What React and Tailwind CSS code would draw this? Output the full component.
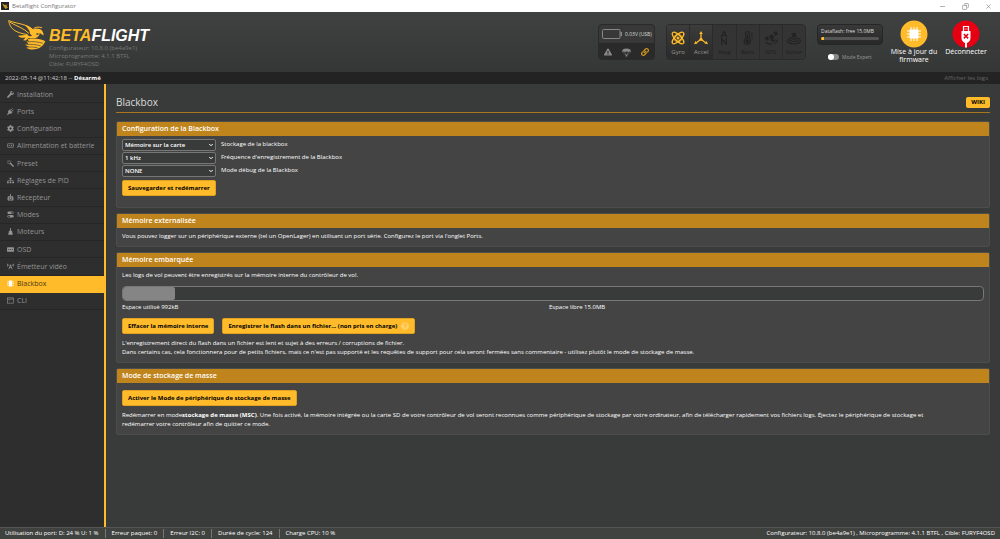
import { useState } from "react";
import { FaWrench, FaCog, FaSitemap, FaExclamationTriangle, FaLink, FaBroadcastTower, FaQuestionCircle } from "react-icons/fa";
import { ChevronDown, Minus, Copy, X } from "lucide-react";

function PlugIcon() {
    return (
        <svg viewBox="0 0 16 16" fill="currentColor">
            <path d="M0 15l3-4c-1-3 0-5 2-7l7 7c-2 2-4 3-7 2l-3 3z" />
            <path d="M8 5l4-4M11 8l4-4" stroke="currentColor" strokeWidth="2" />
            <path d="M6 3l7 7" stroke="currentColor" strokeWidth="1.500" />
        </svg>
    );
}

function BatteryIcon() {
    return (
        <svg viewBox="0 0 16 16" fill="none" stroke="currentColor" strokeWidth="1.600">
            <rect x="1" y="4" width="14" height="8" rx="1" />
            <path d="M4 8h3M9 8h3M10.500 6.500v3" />
        </svg>
    );
}

function WandIcon() {
    return (
        <svg viewBox="0 0 16 16" fill="none" stroke="currentColor">
            <path d="M7 7l8 8" strokeWidth="3" />
            <path d="M5 0v3M0 5h3M1.500 1.500l2 2M9 1.500l-2 2M1.500 9l2-2M5 7v3M7 5h3" strokeWidth="1.400" />
        </svg>
    );
}

function ReceiverIcon() {
    return (
        <svg viewBox="0 0 16 16" fill="currentColor">
            <path d="M7 0h2v5H7z" />
            <path fillRule="evenodd" d="M2 5h12v10H2zM4 8v2h3V8zM9 8v2h3V8zM4 12v1h8v-1z" />
            <path d="M0 8h1v5H0zM15 8h1v5h-1z" />
        </svg>
    );
}

function ModesIcon() {
    return (
        <svg viewBox="0 0 16 16">
            <rect x="1" y="1" width="14" height="6" rx="3" fill="currentColor" />
            <rect x="1" y="9" width="14" height="6" rx="3" fill="currentColor" />
            <circle cx="11.500" cy="4" r="2" fill="#2e2e2e" />
            <circle cx="4.500" cy="12" r="2" fill="#2e2e2e" />
        </svg>
    );
}

function MotorIcon() {
    return (
        <svg viewBox="0 0 16 16" fill="currentColor">
            <path d="M7 0h2v5l3 3v7H4V8l3-3z" />
            <path d="M3 12h10v3H3z" />
        </svg>
    );
}

function OsdIcon() {
    return (
        <svg viewBox="0 0 16 16">
            <rect x="0" y="3" width="16" height="10" rx="1" fill="currentColor" />
            <path d="M2 8h3M6.500 8h3M11 8h3" stroke="#2e2e2e" strokeWidth="1.500" fill="none" />
        </svg>
    );
}

function ChipIcon() {
    return (
        <svg viewBox="0 0 16 16" fill="currentColor">
            <rect x="4" y="1" width="8" height="14" rx="1" />
            <path d="M1 3h2v2H1zM1 7h2v2H1zM1 11h2v2H1zM13 3h2v2h-2zM13 7h2v2h-2zM13 11h2v2h-2z" />
        </svg>
    );
}

function TerminalIcon() {
    return (
        <svg viewBox="0 0 16 16" fill="none" stroke="currentColor" strokeWidth="1.400">
            <rect x="1" y="2" width="14" height="12" />
            <path d="M1 5h14M4 7.500l2 1.500" />
        </svg>
    );
}

const tabs = [
    { name: "Installation", icon: FaWrench },
    { name: "Ports", icon: PlugIcon },
    { name: "Configuration", icon: FaCog },
    { name: "Alimentation et batterie", icon: BatteryIcon },
    { name: "Preset", icon: WandIcon },
    { name: "Réglages de PID", icon: FaSitemap },
    { name: "Récepteur", icon: ReceiverIcon },
    { name: "Modes", icon: ModesIcon },
    { name: "Moteurs", icon: MotorIcon },
    { name: "OSD", icon: OsdIcon },
    { name: "Émetteur vidéo", icon: FaBroadcastTower },
    { name: "Blackbox", icon: ChipIcon },
    { name: "CLI", icon: TerminalIcon },
];

function GyroIcon() {
    return (
        <svg viewBox="0 0 24 24" className="size-[14px]" fill="none" stroke="currentColor" strokeWidth="2.200">
            <ellipse cx="12" cy="12" rx="13" ry="5" transform="rotate(45 12 12)" />
            <ellipse cx="12" cy="12" rx="13" ry="5" transform="rotate(-45 12 12)" />
            <circle cx="12" cy="12" r="6.500" strokeWidth="1.500" />
            <circle cx="12" cy="12" r="1.500" fill="currentColor" />
        </svg>
    );
}

function AccelIcon() {
    return (
        <svg viewBox="0 0 24 24" className="size-[14px]" fill="none" stroke="currentColor" strokeWidth="2.200">
            <path d="M12 4v10L4 20M12 14l8 6" />
            <path d="M12 0l3 5H9zM0 22.500l2.500-5.500 3.500 4.500zM24 22.500L21.500 17 18 21.500z" fill="currentColor" stroke="none" />
            <circle cx="12" cy="14" r="2.600" fill="currentColor" stroke="none" />
        </svg>
    );
}

function MagIcon() {
    return (
        <svg viewBox="0 0 24 24" className="size-[14px]" fill="none" stroke="currentColor" strokeWidth="2">
            <path d="M12 0l4 9-4-2-4 2zM8 24V13l8 10V12" />
        </svg>
    );
}

function BaroIcon() {
    return (
        <svg viewBox="0 0 24 24" className="size-[14px]" fill="none" stroke="currentColor" strokeWidth="2">
            <path d="M8 13V4a3 3 0 0 1 6 0v9a5.500 5.500 0 1 1-6 0z" />
            <circle cx="11" cy="17.500" r="2.500" fill="currentColor" />
            <path d="M11 16V6M17 4h3M17 8h3M17 12h3" />
        </svg>
    );
}

function GpsIcon() {
    return (
        <svg viewBox="0 0 24 24" className="size-[14px]" fill="currentColor">
            <path d="M8 9l6-4 4 6-6 4zM16 3l5-3 3 5-5 3zM1 12l5-3 3 5-5 3zM11 14l5-1v4l-3 1z" />
            <path d="M17 21a7 7 0 0 0 6-6M15 17a3 3 0 0 0 4-3" fill="none" stroke="currentColor" strokeWidth="2" />
            <path d="M3 19c3 3 7 4 11 3" fill="none" stroke="currentColor" strokeWidth="2" />
        </svg>
    );
}

function SonarIcon() {
    return (
        <svg viewBox="0 0 24 24" className="size-[14px]" fill="none" stroke="currentColor" strokeWidth="2">
            <path d="M8 6a5 5 0 0 1 8 0" />
            <path d="M6 10c0 3 2.500 4 6 4s6-1 6-4M3 12c0 4 4 6 9 6s9-2 9-6M0 14c0 5 5 8 12 8s12-3 12-8" />
            <circle cx="12" cy="8" r="2.500" fill="currentColor" />
        </svg>
    );
}

function ParachuteIcon() {
    return (
        <svg viewBox="0 0 16 16" className="size-[9px]" fill="currentColor">
            <path d="M0 7a8 6 0 0 1 16 0l-2.500-1L11 7 8 6 5 7 2.500 6z" />
            <path d="M1 7l6 6M15 7l-6 6M5 7l2.500 6M11 7l-2.500 6" stroke="currentColor" strokeWidth="0.800" />
            <path d="M6.500 12h3v3h-3z" />
        </svg>
    );
}

const sensors = [
    { name: "Gyro", icon: GyroIcon, on: true },
    { name: "Accel", icon: AccelIcon, on: true },
    { name: "Mag", icon: MagIcon },
    { name: "Baro", icon: BaroIcon },
    { name: "GPS", icon: GpsIcon },
    { name: "Sonar", icon: SonarIcon },
];

function BeeLogo({ className }) {
    return (
        <svg viewBox="24 58 116 94" className={className} fill="#ffbb2a">
            {/* wing */}
            <path
                d="M26 61c14 6 36 9 50 14 12 4 20 10 26 18M26 61c2 12 6 20 14 27 10 9 24 12 44 16M30 66c20 12 42 18 58 34"
                fill="none"
                stroke="#ffbb2a"
                strokeWidth="3"
            />
            <path d="M74 74c14 3 22 9 30 18l-10 10c-4-10-10-18-20-28z" />
            {/* second wing and back */}
            <path d="M54 107l28-3 10 6-14 12-8-1 8-8c-10 2-17 0-24-6z" />
            {/* head */}
            <path d="M90 94c8-8 20-12 31-7 8 4 11 10 12 19-6-2-9-4-12-8 0 8-5 14-13 16l-16 2-10-5 16-4c-5-3-8-7-8-13z" />
            <path d="M102 86c4-5 14-7 26-3" fill="none" stroke="#ffbb2a" strokeWidth="3" />
            <path d="M110 100l10 1-8 5z" fill="#393b3a" />
            {/* tail */}
            <path d="M84 118c16-4 38-3 54 6-4 10-12 18-24 23-14 4-26 3-34-3l8-3-12-6 10-3-6-7 8 0z" />
            <path d="M84 126c16-2 32 0 46 4M80 134c14-1 30 0 44 4M84 142c10-1 20 0 30 2" fill="none" stroke="#393b3a" strokeWidth="2" />
        </svg>
    );
}

function FirmwareIcon() {
    return (
        <svg viewBox="0 0 28 28" className="size-7">
            <circle cx="14" cy="14" r="13.500" fill="#ffbb2a" />
            <rect x="9.500" y="9.500" width="9" height="9" rx="1" fill="#fff" />
            <path d="M11 7v14M14 7v14M17 7v14M7 11h14M7 14h14M7 17h14" stroke="#fff" strokeWidth="1" />
        </svg>
    );
}

function DisconnectIcon() {
    return (
        <svg viewBox="0 0 28 28" className="size-7">
            <circle cx="14" cy="14" r="13.500" fill="#e60012" />
            <path d="M11.500 6.500h5v5h-5z" fill="none" stroke="#fff" strokeWidth="1.200" />
            <path d="M9.500 11h9v7c0 3-2 4-3.500 5v4.500h-2V23c-1.500-1-3.500-2-3.500-5z" fill="#fff" />
            <path d="M11.800 14l4.400 4.400M16.200 14l-4.400 4.400" stroke="#e60012" strokeWidth="1.500" />
            <path d="M13 8.500v1M15 8.500v1" stroke="#fff" strokeWidth="1" />
        </svg>
    );
}

function Header() {
    return (
        <header className="flex min-h-[60px] items-start bg-linear-to-b from-[#3f4241] to-[#353736]">
            <div className="flex pt-[7px] pl-2">
                <BeeLogo className="h-8 w-[38px]" />
                <div className="pl-[3px] text-[#777]">
                    <h1 className="pt-[9px] font-['Liberation_Sans',sans-serif] text-[16px] leading-4 font-bold text-white italic">
                        <span className="text-[#ffbb2a]">BETA</span>FLIGHT
                    </h1>
                    <p className="leading-[8px]">Configurateur: 10.8.0 (be4a9e1)</p>
                    <p className="leading-[8px]">Microprogramme: 4.1.1 BTFL</p>
                    <p className="leading-[8px]">Cible: FURYF4OSD</p>
                </div>
            </div>

            <div className="ml-auto flex gap-[11px] pt-3">
                <div className="h-9 w-[57px] overflow-hidden rounded-sm border border-[#292a29] bg-[#373837]">
                    <div className="flex h-[18px] items-center gap-[3px] pl-[3px] text-[5px] text-[#ddd]">
                        <svg viewBox="0 0 20 10" className="h-[10px] w-5 shrink-0">
                            <rect x="0.500" y="0.500" width="17.500" height="9" rx="1" fill="none" stroke="#888" />
                            <path d="M18.500 3h1.500v4h-1.500z" fill="#888" />
                        </svg>
                        <span className="whitespace-nowrap">0.03V (USB)</span>
                    </div>
                    <div className="flex h-[18px] items-center justify-around bg-[#292a29] text-[8px] text-[#888]">
                        <FaExclamationTriangle />
                        <ParachuteIcon />
                        <FaLink className="text-[#d69c22]" />
                    </div>
                </div>

                <ul className="flex h-9 w-[140px] overflow-hidden rounded-sm border border-[#292a29]">
                    {sensors.map((sensor) => (
                        <li
                            key={sensor.name}
                            className={`flex flex-1 flex-col items-center gap-[3px] border-r border-[#2a2b2a] pt-[6px] leading-[8px] last:border-r-0 ${sensor.on ? "bg-linear-to-b from-[#3b3c3b] to-[#292a29] text-[#ffbb2a]" : "bg-[#333433] text-[#222322]"}`}
                        >
                            <sensor.icon />
                            <span className={sensor.on ? "text-[#999]" : "text-[#1f201f]"}>{sensor.name}</span>
                        </li>
                    ))}
                </ul>

                <div className="w-[66px]">
                    <div className="h-[21px] rounded-sm border border-[#252625] bg-linear-to-b from-[#383938] to-[#272827] px-[3px] pt-[2px] text-[5px] leading-[8px] text-[#ddd]">
                        <p className="whitespace-nowrap">Dataflash: free 15.0MB</p>
                        <div className="mt-[2px] h-[3px] overflow-hidden rounded-xs bg-[#555]">
                            <div className="h-full w-[6%] bg-[#ffbb2a]" />
                        </div>
                    </div>
                    <label className="mt-2 flex items-center justify-center gap-[3px] text-[5px] leading-[8px] text-[#999]">
                        <input type="checkbox" className="peer sr-only" />
                        <span className="flex h-[6px] w-[11px] rounded-full bg-[#888] peer-checked:justify-end peer-checked:bg-[#ffbb2a]">
                            <span className="size-[6px] rounded-full bg-white" />
                        </span>
                        Mode Expert
                    </label>
                </div>
            </div>

            <div className="flex pt-2 pr-2 pl-[5px] text-[7px] leading-[8px] font-medium text-white">
                <button className="flex w-[52px] flex-col items-center">
                    <FirmwareIcon />
                    <span>Mise à jour du firmware</span>
                </button>
                <button className="flex w-[52px] flex-col items-center">
                    <DisconnectIcon />
                    <span>Déconnecter</span>
                </button>
            </div>
        </header>
    );
}

function Panel({ title, className, children }) {
    return (
        <section className={`overflow-hidden rounded-xs border border-[#4c4d4c] bg-[#434443] ${className}`}>
            <h3 className="bg-[#bf851c] px-[5px] text-[7px] leading-[14px] font-semibold text-white">{title}</h3>
            <div className="px-[5px]">{children}</div>
        </section>
    );
}

function Button({ className = "", children }) {
    return (
        <button className={`h-4 rounded-xs border border-[#e0a021] bg-[#ffbb2a] px-[5px] font-bold text-black ${className}`}>
            {children}
        </button>
    );
}

function SelectRow({ id, label, options }) {
    return (
        <div className="flex h-[13px] items-center gap-[5px]">
            <div className="relative w-[94px]">
                <select
                    id={id}
                    className="block h-3 w-full appearance-none rounded-xs border border-[#777] bg-[#393b3a] px-[2px] leading-[8px] font-semibold text-white"
                >
                    {options.map((option) => (
                        <option key={option}>{option}</option>
                    ))}
                </select>
                <ChevronDown className="pointer-events-none absolute top-[3px] right-[2px] size-[6px]" strokeWidth={4} />
            </div>
            <label htmlFor={id}>{label}</label>
        </div>
    );
}

function Blackbox() {
    return (
        <main className="min-w-0 flex-1 bg-[#393b3a] pt-3 pr-[10px] pl-[10px]">
            <div className="mb-2 flex h-[17px] items-center justify-between border-b border-[#a8761c] pb-[3px]">
                <h2 className="text-[10px] leading-[13px] text-[#ddd]">Blackbox</h2>
                <a href="#wiki" className="rounded-xs bg-[#ffbb2a] px-[5px] text-[6px] leading-[11px] font-bold text-black">WIKI</a>
            </div>

            <div className="flex flex-col gap-[5px]">
                <Panel title="Configuration de la Blackbox" className="pb-[11px]">
                    <div className="pt-[2px]">
                        <SelectRow id="storage" label="Stockage de la blackbox" options={["Mémoire sur la carte", "Port série"]} />
                        <SelectRow id="rate" label="Fréquence d'enregistrement de la Blackbox" options={["1 kHz", "2 kHz"]} />
                        <SelectRow id="debug" label="Mode débug de la Blackbox" options={["NONE", "GYRO_SCALED"]} />
                    </div>
                    <Button className="mt-[3px] block">Sauvegarder et redémarrer</Button>
                </Panel>

                <Panel title="Mémoire externalisée" className="pb-[5px]">
                    <p className="pt-1">
                        Vous pouvez logger sur un périphérique externe (tel un OpenLager) en utilisant un port série. Configurez le port via l'onglet Ports.
                    </p>
                </Panel>

                <Panel title="Mémoire embarquée" className="pb-[5px]">
                    <p className="pt-1">Les logs de vol peuvent être enregistrés sur la mémoire interne du contrôleur de vol.</p>
                    <div className="mt-[6px] h-[15px] overflow-hidden rounded-sm border border-[#777] bg-[#393b3a]">
                        <div className="h-full w-[6%] rounded-xs bg-[#858585]" />
                    </div>
                    <div className="mt-[2px] mr-2 grid grid-cols-2">
                        <span>Espace utilisé 992kB</span>
                        <span>Espace libre 15.0MB</span>
                    </div>
                    <div className="mt-[6px] mb-[5px] flex gap-2">
                        <Button>Effacer la mémoire interne</Button>
                        <Button className="flex items-center gap-1">
                            Enregistrer le flash dans un fichier... (non pris en charge)
                            <FaQuestionCircle className="size-2 text-[#ffd06a]" />
                        </Button>
                    </div>
                    <p>L'enregistrement direct du flash dans un fichier est lent et sujet à des erreurs / corruptions de fichier.</p>
                    <p>
                        Dans certains cas, cela fonctionnera pour de petits fichiers, mais ce n'est pas supporté et les requêtes de support pour cela seront fermées sans commentaire - utilisez plutôt le mode de stockage de masse.
                    </p>
                </Panel>

                <Panel title="Mode de stockage de masse" className="pb-[5px]">
                    <Button className="mt-[7px] mb-[5px] block">Activer le Mode de périphérique de stockage de masse</Button>
                    <p className="pr-10">
                        Redémarrer en mode<strong>stockage de masse (MSC)</strong>. Une fois activé, la mémoire intégrée ou la carte SD de votre contrôleur de vol seront reconnues comme périphérique de stockage par votre ordinateur, afin de télécharger rapidement vos fichiers logs. Éjectez le périphérique de stockage et redémarrer votre contrôleur afin de quitter ce mode.
                    </p>
                </Panel>
            </div>
        </main>
    );
}

export default function App() {
    const [activeTab, setActiveTab] = useState("Blackbox");

    return (
        <div className="flex min-h-screen flex-col bg-[#393b3a] font-['Open_Sans',sans-serif] text-[6px] leading-[9px] text-white">
            <div className="flex h-3 items-center bg-white pr-2 pl-px text-[#777]">
                <svg viewBox="0 0 16 16" className="mr-[3px] size-2">
                    <rect width="16" height="16" fill="#222" />
                    <path d="M2 3l6 3 5-1-2 3 3 3-5 3-3-4z" fill="#c9952a" />
                </svg>
                Betaflight Configurator
                <div className="ml-auto flex gap-4 text-[#777]">
                    <button aria-label="Réduire"><Minus className="size-[7px]" /></button>
                    <button aria-label="Agrandir"><Copy className="size-[7px] -scale-x-100" /></button>
                    <button aria-label="Fermer"><X className="size-[7px]" /></button>
                </div>
            </div>

            <Header />

            <div className="flex h-3 items-center justify-between bg-[#232323] pr-3 pl-[5px]">
                <p className="text-[#ccc]">2022-05-14 @11:42:18 -- <strong className="text-white">Désarmé</strong></p>
                <a href="#logs" className="text-[#666]">Afficher les logs</a>
            </div>

            <div className="flex flex-1">
                <nav className="w-[106px] shrink-0 border-r-2 border-[#ffbb2a] bg-[#2e2e2e] pt-[2px]">
                    <ul className="grid h-56 auto-rows-fr">
                        {tabs.map((tab) => {
                            const active = tab.name === activeTab;
                            return (
                                <li key={tab.name}>
                                    <a
                                        href="#tab"
                                        onClick={() => setActiveTab(tab.name)}
                                        className={`flex h-full items-center gap-[3px] border-b pl-[7px] text-[7px] whitespace-nowrap ${active ? "border-[#ffbb2a] bg-[#ffbb2a] text-[#4d3a10]" : "border-[#262626] text-[#949494]"}`}
                                    >
                                        <span className={`size-[7px] [&>svg]:size-full ${active ? "text-white" : ""}`}>
                                            <tab.icon />
                                        </span>
                                        {tab.name}
                                    </a>
                                </li>
                            );
                        })}
                    </ul>
                </nav>
                <Blackbox />
            </div>

            <footer className="flex h-3 items-center justify-between border-t border-[#555] bg-[#404240] px-[5px]">
                <div className="flex divide-x divide-[#777]">
                    <span className="pr-[6px]">Utilisation du port: D: 24 % U: 1 %</span>
                    <span className="px-[6px]">Erreur paquet: 0</span>
                    <span className="px-[6px]">Erreur I2C: 0</span>
                    <span className="px-[6px]">Durée de cycle: 124</span>
                    <span className="pl-[6px]">Charge CPU: 10 %</span>
                </div>
                <span>Configurateur: 10.8.0 (be4a9e1) , Microprogramme: 4.1.1 BTFL , Cible: FURYF4OSD</span>
            </footer>
        </div>
    );
}
